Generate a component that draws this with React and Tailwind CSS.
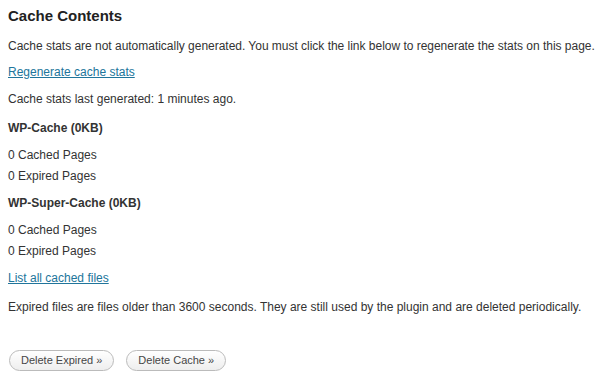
export default function App() {
  const font = { fontFamily: '"Liberation Sans", Arial, sans-serif' }
  return (
    <div className="w-[600px] h-[380px] overflow-hidden bg-white px-[8px] pt-[6px] text-[12px] text-[#333]" style={font}>
      <h3 className="text-[15px] leading-[20px] font-bold text-[#222]">Cache Contents</h3>
      <p className="mt-[10px] leading-[21px] whitespace-nowrap tracking-[-0.02px]">
        Cache stats are not automatically generated. You must click the link below to regenerate the stats on this page.
      </p>
      <p className="mt-[5px] leading-[21px]">
        <a href="#" className="text-[#21759b] underline">Regenerate cache stats</a>
      </p>
      <p className="mt-[6px] leading-[21px]">Cache stats last generated: 1 minutes ago.</p>

      <h4 className="mt-[8px] leading-[21px] font-bold">WP-Cache (0KB)</h4>
      <div className="mt-[6px] leading-[21px]">
        <div>0 Cached Pages</div>
        <div>0 Expired Pages</div>
      </div>

      <h4 className="mt-[6px] leading-[21px] font-bold">WP-Super-Cache (0KB)</h4>
      <div className="mt-[6px] leading-[21px]">
        <div>0 Cached Pages</div>
        <div>0 Expired Pages</div>
      </div>

      <p className="mt-[6px] leading-[21px]">
        <a href="#" className="text-[#21759b] underline">List all cached files</a>
      </p>
      <p className="mt-[8px] leading-[21px]">
        Expired files are files older than 3600 seconds. They are still used by the plugin and are deleted periodically.
      </p>

      <div className="mt-[32px] flex gap-[12px] pl-[1px]">
        <button className="h-[21px] px-[11px] rounded-full border border-[#bbb] bg-gradient-to-b from-white to-[#eee] text-[11px] text-[#464646] leading-none">
          Delete Expired »
        </button>
        <button className="h-[21px] px-[11px] rounded-full border border-[#bbb] bg-gradient-to-b from-white to-[#eee] text-[11px] text-[#464646] leading-none">
          Delete Cache »
        </button>
      </div>
    </div>
  )
}
